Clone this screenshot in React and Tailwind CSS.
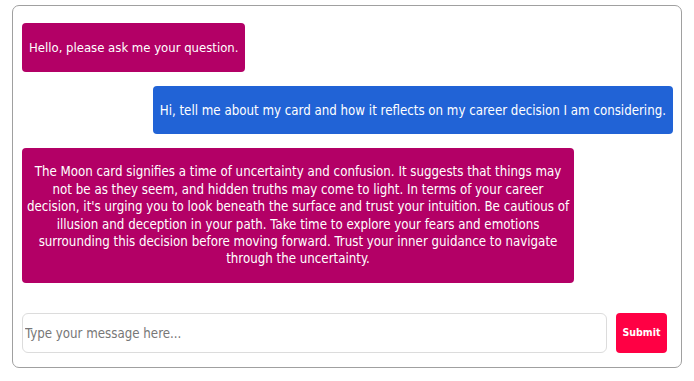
export default function App() {
  const font = { fontFamily: '"DejaVu Sans Condensed", "DejaVu Sans", Tahoma, sans-serif' };
  return (
    <div className="w-[694px] h-[381px] bg-white pt-[5px] px-[12px]" style={font}>
      <div className="h-[363px] border border-[#a0a0a0] rounded-[7px] flex flex-col pt-[17px] pl-[9px] pr-[8px] pb-[14px]">
        <div className="flex flex-col gap-[14px]">
          <div className="self-start h-[49px] flex items-center px-[7px] bg-[#b30066] rounded-[4px] text-white text-[13px] leading-[17px]">
            Hello, please ask me your question.
          </div>
          <div className="self-end h-[48px] flex items-center px-[7px] bg-[#2163d6] rounded-[4px] text-white text-[13.2px] leading-[17px]">
            Hi, tell me about my card and how it reflects on my career decision I am considering.
          </div>
          <div className="self-start w-[552px] h-[135px] flex items-center justify-center bg-[#b30066] rounded-[4px] text-white text-[13.2px] text-center whitespace-nowrap">
            <p className="leading-[17.4px]">
              The Moon card signifies a time of uncertainty and confusion. It suggests that things may
              <br />
              not be as they seem, and hidden truths may come to light. In terms of your career
              <br />
              decision, it's urging you to look beneath the surface and trust your intuition. Be cautious of
              <br />
              illusion and deception in your path. Take time to explore your fears and emotions
              <br />
              surrounding this decision before moving forward. Trust your inner guidance to navigate
              <br />
              through the uncertainty.
            </p>
          </div>
        </div>
        <div className="mt-auto flex items-center gap-[9px] pr-[6px]">
          <input
            type="text"
            placeholder="Type your message here..."
            className="flex-1 h-[40px] border border-[#dcdcdc] rounded-[6px] px-[2px] text-[13.2px] placeholder:text-[#777] outline-none"
            style={font}
          />
          <button className="w-[51px] h-[40px] bg-[#ff0044] rounded-[4px] text-white text-[10.5px] font-bold" style={font}>
            Submit
          </button>
        </div>
      </div>
    </div>
  );
}
